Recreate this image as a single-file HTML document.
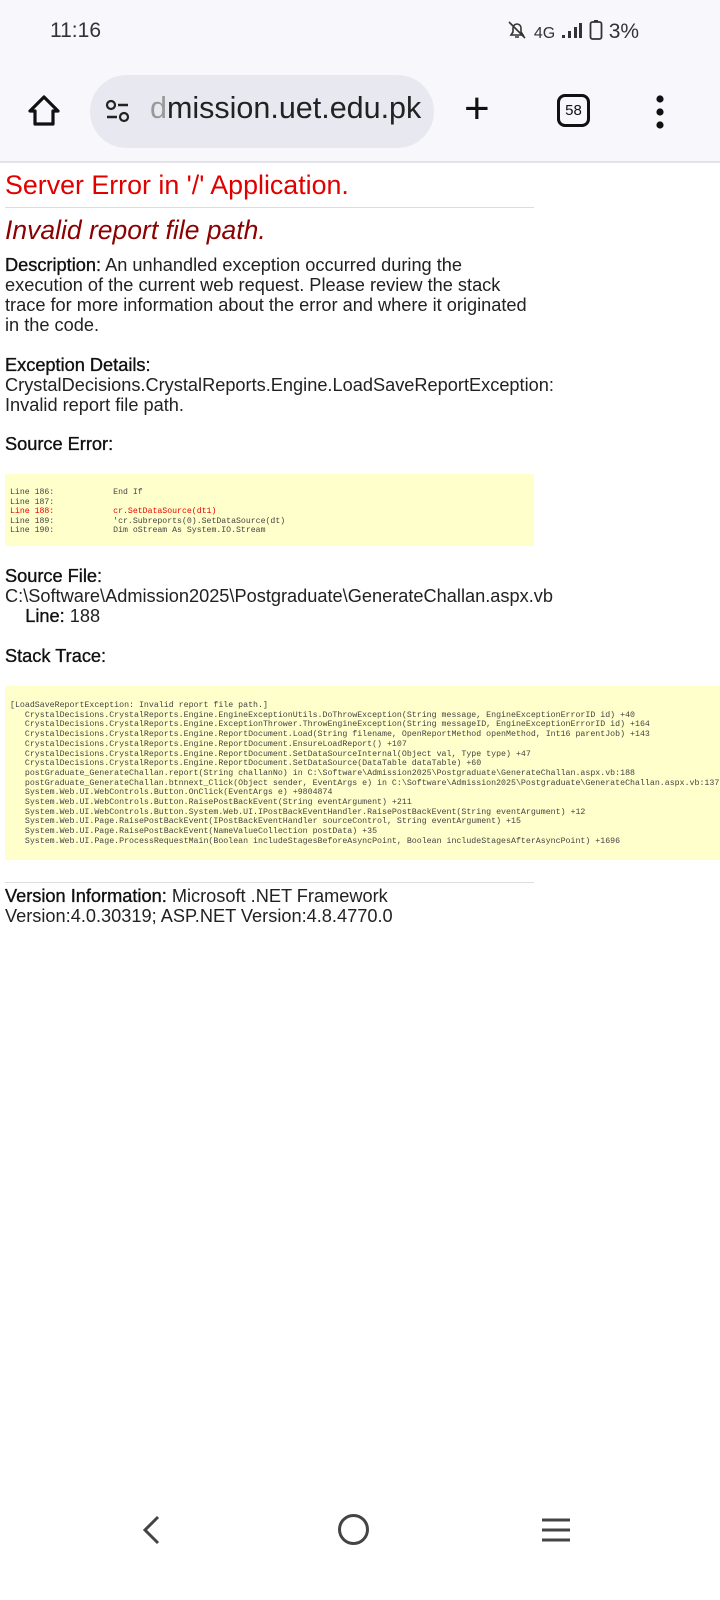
<!DOCTYPE html>
<html><head><meta charset="utf-8"><style>
*{margin:0;padding:0;box-sizing:border-box}
body{width:720px;height:1600px;background:#fff;font-family:"Liberation Sans",sans-serif;position:relative;overflow:hidden;color:#111}
.top{position:absolute;left:0;top:0;width:720px;height:163px;background:#f8f7fc;border-bottom:2px solid #e4e3ea}
.a{position:absolute;white-space:nowrap}
.t{font-size:18.2px;line-height:20px;color:#222}
.b{-webkit-text-stroke:0.35px #111;color:#111}
.box{position:absolute;left:5px;background:#ffffcc;font-family:"Liberation Mono",monospace;white-space:pre;color:#444}
.nav{position:absolute;left:0;top:1490px;width:720px;height:110px;background:#fff}
</style></head><body>
<div class="top">
 <div class="a" style="left:50px;top:19px;font-size:21px;color:#333">11:16</div>
 <div class="a" style="left:506px;top:19px;font-size:21px;color:#333">
  <svg width="22" height="22" viewBox="0 0 22 22" style="vertical-align:-3px"><path d="M5 16h12l-2-3V9a4 4 0 0 0-8 0v4z M9 18h4" fill="none" stroke="#333" stroke-width="1.6"/><path d="M3 3l16 16" stroke="#333" stroke-width="1.6"/></svg>
  <span style="font-size:16px">4G</span>
  <svg width="22" height="20" viewBox="0 0 22 20" style="vertical-align:-2px"><rect x="1" y="15" width="3" height="3" fill="#333"/><rect x="7" y="11" width="3" height="7" fill="#333"/><rect x="13" y="7" width="3" height="11" fill="#333"/><rect x="18" y="3" width="3" height="15" fill="#333"/></svg>
  <svg width="14" height="22" viewBox="0 0 14 22" style="vertical-align:-3px"><rect x="1.5" y="3" width="11" height="17" rx="2" fill="none" stroke="#333" stroke-width="1.8"/><rect x="5" y="1" width="4" height="2" fill="#333"/></svg>
  3%</div>
 <svg class="a" style="left:26px;top:93px" width="36" height="36" viewBox="0 0 36 36"><path d="M18 4L4 18h5v13h18V18h5z" fill="none" stroke="#111" stroke-width="3.2" stroke-linejoin="round"/></svg>
 <div class="a" style="left:90px;top:75px;width:344px;height:73px;border-radius:37px;background:#e8e8f0"></div>
 <svg class="a" style="left:104px;top:99px" width="28" height="26" viewBox="0 0 28 26"><circle cx="7" cy="6" r="4" fill="none" stroke="#222" stroke-width="2.2"/><path d="M14 6h10M3 18h10" stroke="#222" stroke-width="2.4"/><circle cx="20" cy="18" r="4" fill="none" stroke="#222" stroke-width="2.2"/></svg>
 <div class="a" style="left:150px;top:91px;font-size:30.5px;color:#222"><span style="color:#999">d</span>mission.uet.edu.pk</div>
 <div class="a" style="left:464px;top:84px;font-size:44px;font-weight:300;color:#111">+</div>
 <div class="a" style="left:557px;top:94px;width:33px;height:33px;border:3px solid #111;border-radius:8px;font-size:15px;text-align:center;line-height:27px;color:#111">58</div>
 <svg class="a" style="left:652px;top:94px" width="16" height="36" viewBox="0 0 16 36"><circle cx="8" cy="5" r="3.6" fill="#111"/><circle cx="8" cy="18" r="3.6" fill="#111"/><circle cx="8" cy="31" r="3.6" fill="#111"/></svg>
</div>

<div class="a" style="left:5px;top:170px;font-size:26.8px;color:#e00000">Server Error in '/' Application.</div>
<div class="a" style="left:5px;top:207px;width:529px;height:1px;background:#ddd"></div>
<div class="a" style="left:5px;top:215px;font-size:26.5px;color:#8b0000;font-style:italic">Invalid report file path.</div>
<div class="a t" style="left:5px;top:255px"><span class="b">Description:</span> An unhandled exception occurred during the<br>execution of the current web request. Please review the stack<br>trace for more information about the error and where it originated<br>in the code.</div>
<div class="a t" style="left:5px;top:355px"><span class="b">Exception Details:</span><br>CrystalDecisions.CrystalReports.Engine.LoadSaveReportException:<br>Invalid report file path.</div>
<div class="a t b" style="left:5px;top:434px">Source Error:</div>
<div class="box" style="top:474px;width:529px;height:72px;padding:14px 0 0 5px;font-size:8.2px;line-height:9.6px"><span>Line 186:            End If
Line 187:
</span><span style="color:#e00">Line 188:            cr.SetDataSource(dt1)</span>
Line 189:            'cr.Subreports(0).SetDataSource(dt)
Line 190:            Dim oStream As System.IO.Stream</div>
<div class="a t" style="left:5px;top:566px"><span class="b">Source File:</span><br>C:\Software\Admission2025\Postgraduate\GenerateChallan.aspx.vb<br>&nbsp;&nbsp;&nbsp;&nbsp;<span class="b">Line:</span> 188</div>
<div class="a t b" style="left:5px;top:646px">Stack Trace:</div>
<div class="box" style="top:686px;width:715px;height:174px;padding:15px 0 0 5px;font-size:8.28px;line-height:9.7px">[LoadSaveReportException: Invalid report file path.]
   CrystalDecisions.CrystalReports.Engine.EngineExceptionUtils.DoThrowException(String message, EngineExceptionErrorID id) +40
   CrystalDecisions.CrystalReports.Engine.ExceptionThrower.ThrowEngineException(String messageID, EngineExceptionErrorID id) +164
   CrystalDecisions.CrystalReports.Engine.ReportDocument.Load(String filename, OpenReportMethod openMethod, Int16 parentJob) +143
   CrystalDecisions.CrystalReports.Engine.ReportDocument.EnsureLoadReport() +107
   CrystalDecisions.CrystalReports.Engine.ReportDocument.SetDataSourceInternal(Object val, Type type) +47
   CrystalDecisions.CrystalReports.Engine.ReportDocument.SetDataSource(DataTable dataTable) +60
   postGraduate_GenerateChallan.report(String challanNo) in C:\Software\Admission2025\Postgraduate\GenerateChallan.aspx.vb:188
   postGraduate_GenerateChallan.btnnext_Click(Object sender, EventArgs e) in C:\Software\Admission2025\Postgraduate\GenerateChallan.aspx.vb:137
   System.Web.UI.WebControls.Button.OnClick(EventArgs e) +9804874
   System.Web.UI.WebControls.Button.RaisePostBackEvent(String eventArgument) +211
   System.Web.UI.WebControls.Button.System.Web.UI.IPostBackEventHandler.RaisePostBackEvent(String eventArgument) +12
   System.Web.UI.Page.RaisePostBackEvent(IPostBackEventHandler sourceControl, String eventArgument) +15
   System.Web.UI.Page.RaisePostBackEvent(NameValueCollection postData) +35
   System.Web.UI.Page.ProcessRequestMain(Boolean includeStagesBeforeAsyncPoint, Boolean includeStagesAfterAsyncPoint) +1696</div>
<div class="a" style="left:5px;top:882px;width:529px;height:1px;background:#ddd"></div>
<div class="a t" style="left:5px;top:886px"><span class="b">Version Information:</span> Microsoft .NET Framework<br>Version:4.0.30319; ASP.NET Version:4.8.4770.0</div>

<div class="nav">
 <svg class="a" style="left:138px;top:24px" width="26" height="32" viewBox="0 0 26 32"><path d="M20 3L7 16l13 13" fill="none" stroke="#444" stroke-width="3"/></svg>
 <div class="a" style="left:338px;top:24px;width:31px;height:31px;border:3.2px solid #444;border-radius:50%"></div>
 <svg class="a" style="left:540px;top:27px" width="32" height="26" viewBox="0 0 32 26"><path d="M2 3h28M2 13h28M2 23h28" stroke="#444" stroke-width="3"/></svg>
</div>
</body></html>
